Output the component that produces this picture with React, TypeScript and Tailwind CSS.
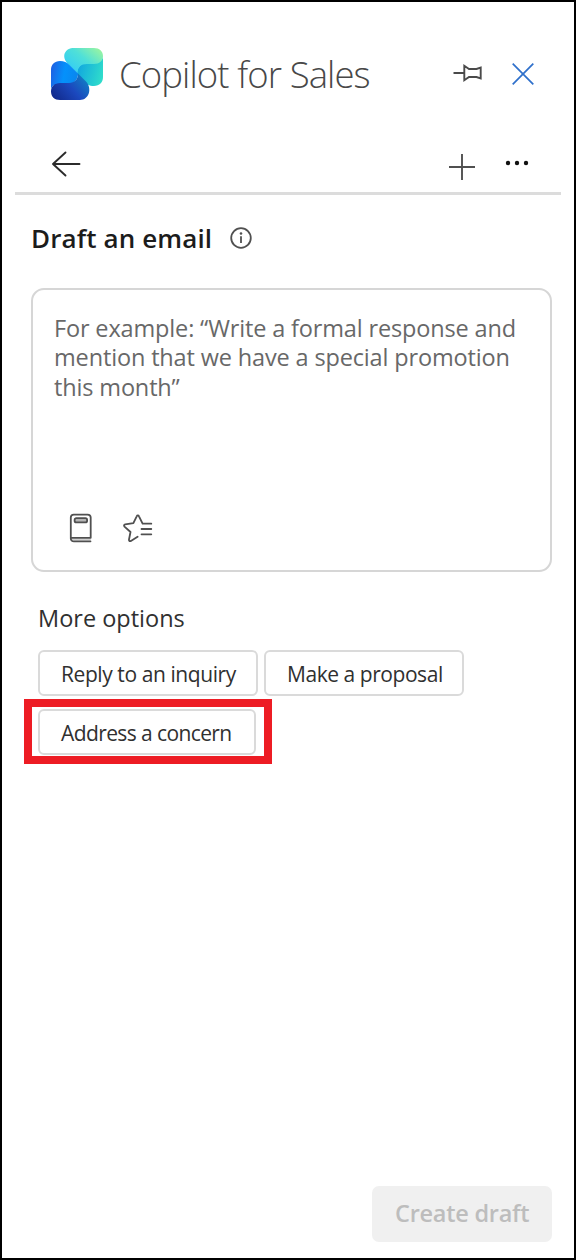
import React from "react";

function Logo() {
  return (
    <svg width="54" height="54" viewBox="0 0 54 54" className="shrink-0">
      <defs>
        <linearGradient id="top" x1="0.1" y1="0.8" x2="1" y2="0.1">
          <stop offset="0" stopColor="#33cdf5" />
          <stop offset="0.5" stopColor="#4fe0d8" />
          <stop offset="1" stopColor="#9cf5a0" />
        </linearGradient>
        <linearGradient id="right" x1="0" y1="0.3" x2="1" y2="0.6">
          <stop offset="0" stopColor="#10a5e0" />
          <stop offset="1" stopColor="#2fdccb" />
        </linearGradient>
        <linearGradient id="left" x1="0" y1="0.3" x2="1" y2="0.5">
          <stop offset="0" stopColor="#1d62e4" />
          <stop offset="0.5" stopColor="#0491fb" />
          <stop offset="1" stopColor="#0a86ee" />
        </linearGradient>
        <linearGradient id="bottom" x1="0" y1="0.8" x2="1" y2="0.2">
          <stop offset="0" stopColor="#122a8c" />
          <stop offset="0.5" stopColor="#1b48be" />
          <stop offset="1" stopColor="#1184c6" />
        </linearGradient>
      </defs>
      <path d="M27 26C27 20 31 16 37 16H44C49 16 53 13 53 9V30C53 35.500 49.500 39 44 39C39 39 36.500 37 34 34L27 28Z" fill="url(#right)" />
      <path d="M24 1H44C49.500 1 53 4.500 53 9C53 13.500 49.500 17 44 17H37C31 17 27.500 20 27.500 26.500L17.500 16.500C11 9 15 1 24 1Z" fill="url(#top)" />
      <path d="M10 14C14 14 17 15.500 19.500 18L28 26.500C28 32.500 24 37 19 37H10C5 37 1 39 1 43V23C1 17.500 4.500 14 10 14Z" fill="url(#left)" />
      <path d="M28 26.500L36 34.500C42.500 41.500 39 53 30 53H10C4.500 53 1 49.500 1 44.500C1 39.500 4.500 36 10 36H19C24.500 36 28 32.500 28 26.500Z" fill="url(#bottom)" />
    </svg>
  );
}

function PinIcon() {
  return (
    <svg width="30" height="20" viewBox="0 0 30 20" fill="none" stroke="#4a4a4a" strokeWidth="1.900">
      <path d="M0.500 10H11M11.300 2.800V17.200L16 14H23.500L27.700 15.500V4.500L23.500 6H16Z" />
    </svg>
  );
}

function CloseIcon() {
  return (
    <svg width="22" height="22" viewBox="0 0 22 22" stroke="#2f70cb" strokeWidth="1.700">
      <path d="M0.700 0.700L21.300 21.300M21.300 0.700L0.700 21.300" />
    </svg>
  );
}

function BackIcon() {
  return (
    <svg width="30" height="26" viewBox="0 0 30 26" fill="none" stroke="#2b2b2b" strokeWidth="1.900" strokeLinecap="round" strokeLinejoin="round">
      <path d="M28.500 13H2M14.500 1.500L2 13L14.500 24.500" />
    </svg>
  );
}

function PlusIcon() {
  return (
    <svg width="26" height="26" viewBox="0 0 26 26" stroke="#505050" strokeWidth="1.900">
      <path d="M13 0V26M0 13H26" />
    </svg>
  );
}

function MoreIcon() {
  return (
    <svg width="24" height="6" viewBox="0 0 24 6" fill="#111">
      <circle cx="3" cy="3" r="2.200" />
      <circle cx="12" cy="3" r="2.200" />
      <circle cx="21" cy="3" r="2.200" />
    </svg>
  );
}

function InfoIcon() {
  return (
    <svg width="22" height="22" viewBox="0 0 22 22" fill="none" stroke="#505050" strokeWidth="1.800">
      <circle cx="11" cy="11" r="9.800" />
      <path d="M11 9.300V16" />
      <circle cx="11" cy="6.500" r="1.300" fill="#505050" stroke="none" />
    </svg>
  );
}

function BookIcon() {
  return (
    <svg width="24" height="30" viewBox="0 0 24 30" fill="none" stroke="#505050" strokeWidth="1.800" strokeLinecap="round" strokeLinejoin="round">
      <path d="M3 26.700H21" stroke="#d0d0d0" />
      <path d="M21.500 28.300H5C3 28.300 1.800 27.300 1.800 25.500V4.500C1.800 2.700 3 1.600 4.800 1.600H18.500C20.500 1.600 21.700 2.700 21.700 4.500V24.800H2" />
      <rect x="5.600" y="5.200" width="12.500" height="4.200" rx="1.700" fill="#b5b5b5" />
    </svg>
  );
}

function StarListIcon() {
  return (
    <svg width="30" height="28" viewBox="0 0 30 28" fill="none" stroke="#505050" strokeWidth="1.800" strokeLinecap="round" strokeLinejoin="round">
      <path d="M28.300 9.700H19.600L16 2.300C15.500 1.100 14.200 1.100 13.700 2.300L10.400 9.200L2.200 10.300C1 10.500 0.700 11.700 1.500 12.600L7.500 18L6 25.500C5.800 27 6.800 27.500 7.900 26.900L14.600 22.800" />
      <path d="M18.500 15H28.300M18.500 20.300H28.300" />
    </svg>
  );
}

function OptionButton({ className, children }: { className: string; children: React.ReactNode }) {
  return (
    <button className={`flex h-[46px] shrink-0 items-center whitespace-nowrap rounded-[6px] border-2 border-[#dadada] bg-white pl-[21px] text-[21px] text-[#303030] ${className}`}>
      {children}
    </button>
  );
}

export default function App() {
  return (
    <main className="flex h-[1260px] w-[576px] flex-col border-2 border-black bg-white font-['Open_Sans',sans-serif]">
      <header className="flex h-[103px] items-center pt-[40px] pl-[48px]">
        <Logo />
        <h1 className="ml-[15px] w-[300px] whitespace-nowrap text-[36.500px] font-light leading-[50px] tracking-[-0.900px] text-[#484848]">Copilot for Sales</h1>
        <button className="ml-[34px] shrink-0 pb-px"><PinIcon /></button>
        <button className="ml-[29px] shrink-0"><CloseIcon /></button>
      </header>
      <nav className="mx-[13px] flex h-[90px] items-start border-b-3 border-[#dcdcdc] pl-[35.500px]">
        <button className="mt-[46px]"><BackIcon /></button>
        <button className="mt-[49px] ml-[368.500px]"><PlusIcon /></button>
        <button className="mt-[55px] ml-[30px]"><MoreIcon /></button>
      </nav>
      <section className="flex h-[93px] items-center pb-[7px] pl-[29px]">
        <h2 className="w-[199px] whitespace-nowrap text-[26px] font-semibold tracking-[0.120px] text-[#1c1c1c]">Draft an email</h2>
        <InfoIcon />
      </section>
      <section className="ml-[29px] flex h-[284px] w-[521px] flex-col rounded-[13px] border-2 border-[#d6d6d6] pt-[23.500px] pl-[21px] text-[23.500px] leading-[29.500px] text-[#686868]">
        <p className="whitespace-nowrap tracking-[-0.150px]">
          For example: “Write a formal response and<br />
          mention that we have a special promotion<br />
          this month”
        </p>
        <div className="mt-[110.500px] flex items-center pl-[15px]">
          <BookIcon />
          <span className="ml-[30px]"><StarListIcon /></span>
        </div>
      </section>
      <h3 className="mt-[30px] ml-[36px] h-[32px] text-[23.500px] leading-[32px] tracking-[0px] text-[#303030]">More options</h3>
      <div className="mt-[16px] flex gap-[6px] pl-[36px]">
        <OptionButton className="w-[220px] pt-[3px] tracking-[-0.420px]">Reply to an inquiry</OptionButton>
        <OptionButton className="w-[200px] pt-[3px] tracking-[-0.450px]">Make a proposal</OptionButton>
      </div>
      <div className="mt-[3px] ml-[22px] flex h-[65px] w-[248px] items-center border-8 border-[#ed1c24] pl-[6px]">
        <OptionButton className="w-[218px] pt-[5px] tracking-[-0.600px]">Address a concern</OptionButton>
      </div>
      <footer className="mt-auto flex justify-end pr-[22px] pb-[16px]">
        <button className="flex h-[56px] w-[180px] items-center whitespace-nowrap rounded-[7px] bg-[#f0f0f0] pl-[23px] text-[23.500px] font-semibold tracking-[-0.250px] text-[#bdbdbd]">Create draft</button>
      </footer>
    </main>
  );
}
